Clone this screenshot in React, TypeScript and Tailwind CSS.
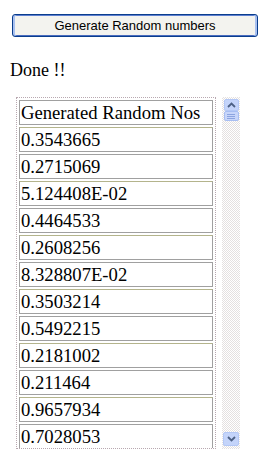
import React from "react";

const rows = [
  "0.3543665",
  "0.2715069",
  "5.124408E-02",
  "0.4464533",
  "0.2608256",
  "8.328807E-02",
  "0.3503214",
  "0.5492215",
  "0.2181002",
  "0.211464",
  "0.9657934",
  "0.7028053",
];

function Cell({ text, olive }: { text: string; olive: boolean }) {
  return (
    <div
      className={
        olive
          ? "h-[25px] w-[194px] shrink-0 border border-[#a0a0a0] border-t-[#b4b48c] pl-[1px] pt-[1px] leading-[21px] text-[18.67px] text-black"
          : "h-[25px] w-[194px] shrink-0 border border-[#a0a0a0] pl-[1px] pt-[1px] leading-[21px] text-[18.67px] text-black"
      }
    >
      {text}
    </div>
  );
}

export default function App() {
  return (
    <div className="relative h-[459px] w-[271px] overflow-hidden bg-white font-['Liberation_Serif',serif]">
      <div className="pl-[12px] pt-[14px]">
        <button className="flex h-[23px] w-[246px] items-center justify-center rounded-[3px] border border-[#0a3d8c] bg-[#f3f3ef] font-['Liberation_Sans',Arial,sans-serif] text-[13px] leading-none text-black shadow-[inset_2px_0_0_#a8c0f0,inset_-2px_0_0_#a8c0f0,inset_0_1px_0_#5d7fd0,inset_0_-1px_0_#4a6cc0]">
          Generate Random numbers
        </button>
      </div>
      <div className="pl-[10px] pt-[23px] text-[18px] leading-[20px] text-black">Done !!</div>
      <div className="flex gap-[6px] pl-[16px] pt-[17px]">
        <div className="flex h-[352px] w-[200px] flex-col gap-[2px] overflow-hidden border border-dotted border-[#b8a8b0] pl-[2px] pt-[2px]">
          <Cell text="Generated Random Nos" olive={false} />
          {rows.map((r, i) => (
            <Cell key={r} text={r} olive={i % 2 === 0} />
          ))}
        </div>
        <div className="flex h-[352px] w-[18px] flex-col items-center bg-[repeating-conic-gradient(#e4e0e0_0_25%,#ffffff_0_50%)] bg-[length:2px_2px] pt-[2px]">
          <div className="flex h-[12px] w-[15px] items-center justify-center rounded-[2px] border border-[#b4c8f6] bg-[#c4d4fa]">
            <svg width="9" height="6" viewBox="0 0 9 6">
              <path d="M1 5 L4.5 1.5 L8 5" stroke="#4d6185" strokeWidth="1.8" fill="none" />
            </svg>
          </div>
          <div className="flex h-[10px] w-[15px] flex-col items-center justify-center gap-[1px] rounded-[2px] border border-[#a8bef2] bg-[#c8d6fa]">
            <div className="h-px w-[8px] bg-[#8ca4e0]" />
            <div className="h-px w-[8px] bg-[#8ca4e0]" />
            <div className="h-px w-[8px] bg-[#8ca4e0]" />
          </div>
          <div className="flex-1" />
          <div className="mb-[3px] flex h-[14px] w-[16px] items-center justify-center rounded-[2px] border border-[#b4c8f6] bg-[#c4d4fa]">
            <svg width="9" height="6" viewBox="0 0 9 6">
              <path d="M1 1 L4.5 4.5 L8 1" stroke="#4d6185" strokeWidth="1.8" fill="none" />
            </svg>
          </div>
        </div>
      </div>
    </div>
  );
}
